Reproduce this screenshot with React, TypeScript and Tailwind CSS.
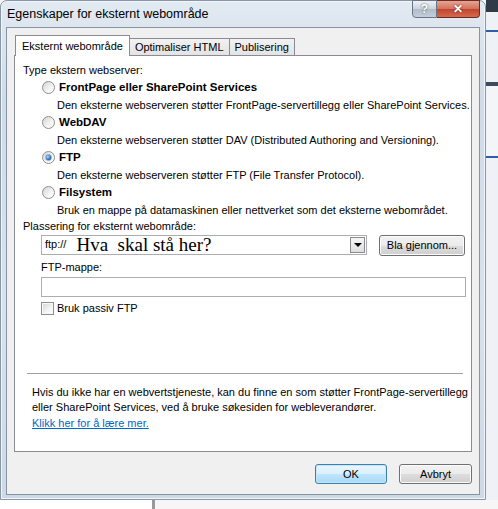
import React from 'react'

const FONT = { fontFamily: '"Liberation Sans", Arial, sans-serif' }

function Radio({ checked }: { checked?: boolean }) {
  return (
    <span className="relative inline-flex h-[13px] w-[13px] shrink-0 items-center justify-center rounded-full border border-[#8e8f8f] bg-[linear-gradient(135deg,#d4d4d4,#f4f4f4_60%,#ffffff)]">
      {checked && (
        <span className="h-[7px] w-[7px] rounded-full border border-[#7fa4c6] bg-[radial-gradient(circle_at_35%_35%,#b9e1fb,#2a6fb5_60%,#134a86)]" />
      )}
    </span>
  )
}

function OptionRow({ label, desc, checked }: { label: string; desc: string; checked?: boolean }) {
  return (
    <>
      <div className="flex h-[17.5px] items-center gap-[4px] pl-[19px]">
        <Radio checked={checked} />
        <span className="whitespace-nowrap text-[11.5px] font-bold">{label}</span>
      </div>
      <div className="flex h-[17.5px] items-center whitespace-nowrap pl-[34px]">{desc}</div>
    </>
  )
}

function Button({ children, primary, className = '' }: { children: React.ReactNode; primary?: boolean; className?: string }) {
  return (
    <div
      className={`flex items-center justify-center rounded-[3px] border ${
        primary
          ? 'border-[#3c7fb1] bg-[linear-gradient(#eaf6fd,#d9f0fc_50%,#bee6fd_51%,#a7d9f5)] shadow-[inset_0_0_0_1px_#c6e6f8]'
          : 'border-[#707070] bg-[linear-gradient(#f2f2f2,#ebebeb_50%,#dddddd_51%,#cfcfcf)] shadow-[inset_0_0_0_1px_#fcfcfc]'
      } ${className}`}
    >
      {children}
    </div>
  )
}

export default function App() {
  return (
    <div className="flex h-[509px] w-[498px] flex-col overflow-hidden bg-[#f4f4f4] text-[11px] text-black" style={FONT}>
      <div className="flex h-[500px] shrink-0">
        {/* dialog window */}
        <div className="flex h-[500px] w-[486px] shrink-0 flex-col rounded-t-[7px] border border-[#8797a8] bg-[linear-gradient(180deg,#e2eaf2,#cfdbe7_20%,#d8e2ec_60%,#cdd9e5)] pb-[4px] pl-[5px] pr-[5px] shadow-[inset_0_0_0_1px_#f2f6fa,0_1px_0_#7fe4f4]">
          {/* title bar */}
          <div className="flex h-[26px] shrink-0 items-start justify-between">
            <span className="pl-[1px] pt-[6px] text-[12.5px] leading-[15px]">Egenskaper for eksternt webområde</span>
            <div className="-mt-[1px] flex h-[18px]">
              <div className="flex w-[25px] items-center justify-center rounded-bl-[4px] border border-[#6a7482] bg-[linear-gradient(#eef2f6,#c9d2dc_50%,#b0bcc9_51%,#c3ced9)] text-[12px] font-bold text-white [text-shadow:0_0_2px_#444]">
                ?
              </div>
              <div className="flex w-[43px] items-center justify-center rounded-br-[4px] border border-l-0 border-[#6b2a22] bg-[linear-gradient(#e8a493,#d0715c_50%,#c1432c_51%,#d46a4f)] text-[12px] font-bold text-white [text-shadow:0_0_2px_#5a1a10]">
                ✕
              </div>
            </div>
          </div>
          {/* client area */}
          <div className="flex flex-1 flex-col border border-[#8593a3] bg-[#f0f0f0] px-[7px] pb-[9px] pt-[6px]">
            {/* tabs */}
            <div className="flex h-[21px] items-end pl-[1px]">
              <div className="relative z-10 -mb-[1px] flex h-[21px] items-start border border-b-0 border-[#898c95] bg-white px-[6px] pt-[2px]">
                Eksternt webområde
              </div>
              <div className="flex h-[17px] items-center border border-b-0 border-l-0 border-[#898c95] bg-[linear-gradient(#f2f2f2,#e3e3e3)] px-[5px]">
                Optimaliser HTML
              </div>
              <div className="flex h-[17px] items-center border border-b-0 border-l-0 border-[#898c95] bg-[linear-gradient(#f2f2f2,#e3e3e3)] px-[5px]">
                Publisering
              </div>
            </div>
            {/* panel */}
            <div className="flex h-[397px] flex-col border border-[#898c95] bg-white pl-[8px] pr-[6px] pt-[5px]">
              <div className="flex h-[17.5px] items-center">Type ekstern webserver:</div>
              <OptionRow label="FrontPage eller SharePoint Services" desc="Den eksterne webserveren støtter FrontPage-servertillegg eller SharePoint Services." />
              <OptionRow label="WebDAV" desc="Den eksterne webserveren støtter DAV (Distributed Authoring and Versioning)." />
              <OptionRow label="FTP" desc="Den eksterne webserveren støtter FTP (File Transfer Protocol)." checked />
              <OptionRow label="Filsystem" desc="Bruk en mappe på datamaskinen eller nettverket som det eksterne webområdet." />
              <div className="flex h-[16px] items-center">Plassering for eksternt webområde:</div>
              <div className="flex items-start gap-[12px] pl-[18px]">
                <div className="flex h-[20px] w-[326px] items-center border border-[#abadb3] pl-[3px] pr-[1px]">
                  <span className="text-[11px]">ftp://</span>
                  <span className="ml-[10px] text-[19px] leading-[18px]" style={{ fontFamily: '"Liberation Serif", "Times New Roman", serif' }}>
                    Hva&nbsp;&nbsp;skal stå her?
                  </span>
                  <div className="ml-auto flex h-[16px] w-[15px] items-center justify-center border border-[#8a8a8a] bg-[linear-gradient(#f6f6f6,#dedede)]">
                    <span className="h-0 w-0 border-x-[4px] border-t-[4px] border-x-transparent border-t-black" />
                  </div>
                </div>
                <Button className="h-[21px] w-[86px]">Bla gjennom...</Button>
              </div>
              <div className="mt-[3px] flex h-[17.5px] items-center pl-[18px]">FTP-mappe:</div>
              <div className="ml-[18px] mt-[1px] h-[20px] w-[425px] border border-[#abadb3]" />
              <div className="mt-[3px] flex items-center gap-[3px] pl-[18px]">
                <span className="h-[13px] w-[13px] border border-[#8e8f8f] bg-[linear-gradient(135deg,#d4d4d4,#f4f4f4_60%,#ffffff)] shadow-[inset_0_0_0_1px_#f8f8f8]" />
                <span>Bruk passiv FTP</span>
              </div>
              <div className="ml-[4px] mr-[2px] mt-[56px] h-px bg-[#a0a0a0]" />
              <div className="ml-[9px] mt-[11px] whitespace-nowrap leading-[15.5px]">
                <div>Hvis du ikke har en webvertstjeneste, kan du finne en som støtter FrontPage-servertillegg</div>
                <div>eller SharePoint Services, ved å bruke søkesiden for webleverandører.</div>
                <div className="text-[#0066cc] underline">Klikk her for å lære mer.</div>
              </div>
            </div>
            {/* buttons */}
            <div className="mt-[12px] flex justify-end gap-[12px]">
              <Button primary className="h-[20px] w-[72px]">OK</Button>
              <Button className="h-[20px] w-[73px]">Avbryt</Button>
            </div>
          </div>
        </div>
        {/* background window strip */}
        <div className="flex flex-1 flex-col bg-[#e9eef3]">
          <div className="h-[12px] bg-[#2f3b48]" />
          <div className="h-[18px] bg-[#eef2f6]" />
          <div className="h-[2px] bg-[#2d5fa8]" />
          <div className="h-[50px] bg-[#eef2f6]" />
          <div className="h-[4px] bg-[#3d4c5c]" />
          <div className="h-[70px] bg-[#f3f6f9]" />
          <div className="h-[2px] bg-[#2d5fa8]" />
          <div className="flex-1 bg-[#eef2f6]" />
        </div>
      </div>
      <div className="flex flex-1">
        <div className="w-[152px] bg-white" />
        <div className="w-[3px] bg-[#9a9a9a]" />
        <div className="flex-1 bg-[#f6f6f6]" />
      </div>
    </div>
  )
}
